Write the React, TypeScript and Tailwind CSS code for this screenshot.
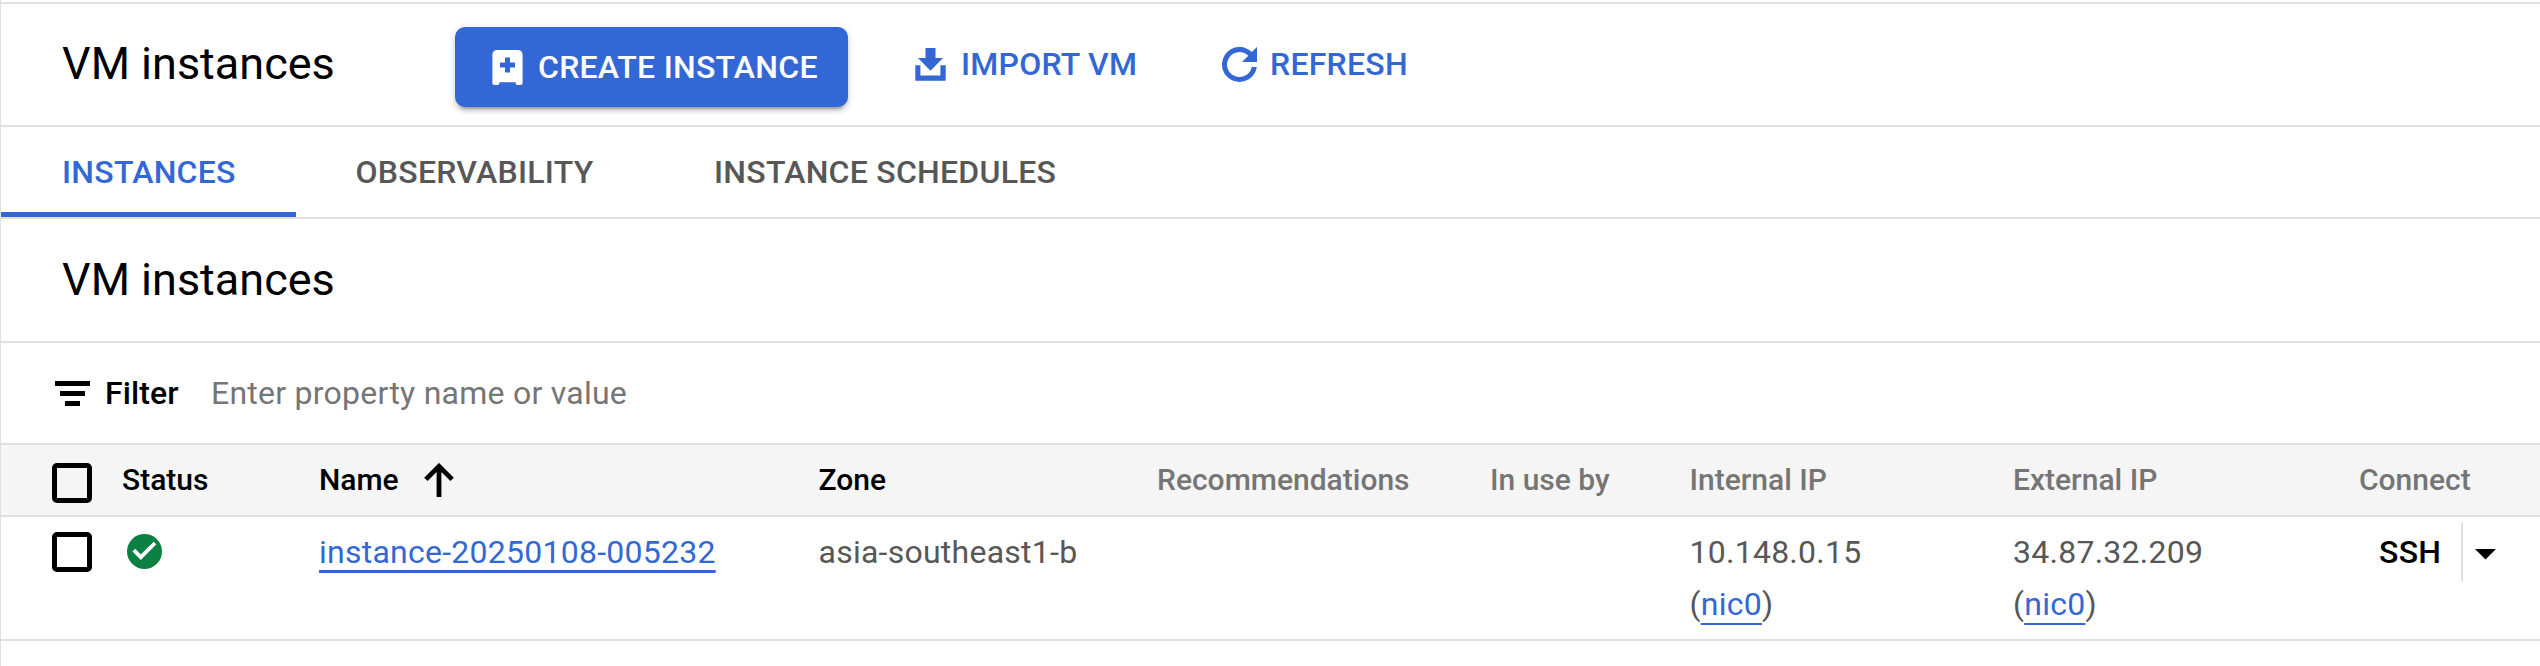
import type { ReactNode } from "react";

function CreateIcon() {
  return (
    <svg width="31" height="35" viewBox="0 0 31 35" className="block shrink-0">
      <path
        fill="#fff"
        fillRule="evenodd"
        d="M5 0H26A4.6 4.6 0 0 1 30.6 4.6V33.2A1.8 1.8 0 0 1 28.8 35H25.4A1.8 1.8 0 0 1 23.6 33.2V32.2H7.4V33.2A1.8 1.8 0 0 1 5.6 35H2.2A1.8 1.8 0 0 1 .4 33.2V4.6A4.6 4.6 0 0 1 5 0ZM13 7.4V12.4H8V17.4H13V22.5H18V17.4H23V12.4H18V7.4Z"
      />
    </svg>
  );
}

function ImportIcon() {
  return (
    <svg width="31" height="33" viewBox="0 0 31 33" className="block shrink-0" fill="#3367d6">
      <path d="M10.5 0H20.5V10H28L15.5 22.7L3 10H10.5Z" />
      <path d="M.3 17.2H5.4V27.4H25.4V17.2H30.7V32.7H.3Z" />
    </svg>
  );
}

function RefreshIcon() {
  return (
    <svg width="35" height="35" viewBox="0 0 35 35" className="block shrink-0" fill="#3367d6">
      <path d="M29.9 5.1L35 0V15H20L26.3 8.7A12.5 12.5 0 1 0 29.75 20H34.8A17.5 17.5 0 1 1 29.9 5.1Z" />
    </svg>
  );
}

function FilterIcon() {
  return (
    <svg width="35" height="25" viewBox="0 0 35 25" className="block shrink-0">
      <path d="M0 0H35V5H0ZM5 10H30V15H5ZM10 20H25V25H10Z" />
    </svg>
  );
}

function SortIcon() {
  return (
    <svg width="30" height="34" viewBox="0 0 30 34" className="block shrink-0" fill="none" stroke="#000">
      <path d="M15 4V34" strokeWidth="4.8" />
      <path d="M1.9 16.4L15 3.3L28.1 16.4" strokeWidth="4.8" />
    </svg>
  );
}

function StatusIcon() {
  return (
    <svg width="35" height="35" viewBox="0 0 35 35" className="block">
      <circle cx="17.5" cy="17.5" r="17.5" fill="#0b8043" />
      <path d="M6.8 16.2L13.8 23.2L28 9" fill="none" stroke="#fff" strokeWidth="3.8" />
    </svg>
  );
}

function Checkbox() {
  return <span role="checkbox" aria-checked="false" className="block h-10 w-10 rounded-[5px] border-5 border-black" />;
}

function Nic({ address }: { address: string }) {
  return (
    <div>
      <div>{address}</div>
      <div>
        (
        <a className="text-[#3367d6] underline decoration-[#3367d6] decoration-2 underline-offset-8 [text-decoration-skip-ink:none]">
          nic0
        </a>
        )
      </div>
    </div>
  );
}

const columns = "grid grid-cols-[121px_197px_499.5px_338.5px_333px_199.5px_323.5px_1fr]";

function Head({ children, muted }: { children: ReactNode; muted?: boolean }) {
  return <div className={muted ? "text-[#757575]" : "text-black"}>{children}</div>;
}

export default function App() {
  return (
    <div className="flex h-[666px] w-[2540px] flex-col overflow-hidden border-l border-[#e0e0e0] bg-white pt-0.5 font-['Roboto',sans-serif] text-[32px] leading-[52px] tracking-[0.25px] whitespace-nowrap text-black">
      <header className="flex h-[125px] items-start border-y-2 border-[#e0e0e0] pl-[61px]">
        <h1 className="mt-[34px] w-[393px] text-[45px] tracking-normal">VM instances</h1>
        <button className="mt-[23px] flex h-20 w-[393px] items-center rounded-[10px] bg-[#3367d6] pl-[37px] font-medium text-white shadow-[0_6px_2px_-4px_rgba(0,0,0,0.2),0_4px_4px_rgba(0,0,0,0.14),0_2px_10px_rgba(0,0,0,0.12)]">
          <CreateIcon />
          <span className="ml-[15px]">CREATE INSTANCE</span>
        </button>
        <button className="mt-[34px] ml-[67px] flex w-[307px] items-center font-medium text-[#3367d6]">
          <ImportIcon />
          <span className="ml-[15px]">IMPORT VM</span>
        </button>
        <button className="mt-[34px] flex items-center font-medium text-[#3367d6]">
          <RefreshIcon />
          <span className="ml-[13px]">REFRESH</span>
        </button>
      </header>

      <nav className="flex h-[92px] border-b-2 border-[#e0e0e0] font-medium text-[#575757]">
        <a className="flex w-[295px] items-center border-b-5 border-[#3367d6] pt-[5px] pl-[61px] text-[#3367d6]">INSTANCES</a>
        <a className="flex w-[358px] items-center pl-[59.5px]">OBSERVABILITY</a>
        <a className="flex items-center pl-[60px]">INSTANCE SCHEDULES</a>
      </nav>

      <section className="flex h-[124px] items-center border-b-2 border-[#e0e0e0] pl-[61px]">
        <h2 className="text-[45px] tracking-normal">VM instances</h2>
      </section>

      <div className="flex h-[102px] items-center border-b-2 border-[#e0e0e0] pl-[54px]">
        <FilterIcon />
        <span className="ml-[15px] w-[106px] font-medium tracking-[0.1px]">Filter</span>
        <span className="text-[#757575]">Enter property name or value</span>
      </div>

      <div className={`${columns} h-[72px] items-center border-b-2 border-[#e0e0e0] bg-[#f5f5f5] text-[30px] font-medium tracking-normal`}>
        <div className="pt-[6px] pl-[51px]">
          <Checkbox />
        </div>
        <Head>Status</Head>
        <div className="flex items-center">
          Name
          <span className="ml-[25px]">
            <SortIcon />
          </span>
        </div>
        <Head>Zone</Head>
        <Head muted>Recommendations</Head>
        <Head muted>In use by</Head>
        <Head muted>Internal IP</Head>
        <div className="grid grid-cols-[346px_1fr] text-[#757575]">
          <span>External IP</span>
          <span>Connect</span>
        </div>
      </div>

      <div className={`${columns} h-[124px] items-start border-b-2 border-[#e0e0e0] pt-[9px] text-[#575757]`}>
        <div className="pt-[6px] pl-[51px]">
          <Checkbox />
        </div>
        <div className="pt-2 pl-[5px]">
          <StatusIcon />
        </div>
        <div>
          <a className="text-[#3367d6] underline decoration-[#3367d6] decoration-[3px] underline-offset-[7px] [text-decoration-skip-ink:none]">
            instance-20250108-005232
          </a>
        </div>
        <div>asia-southeast1-b</div>
        <div />
        <div />
        <Nic address="10.148.0.15" />
        <div className="grid grid-cols-[366px_82px_1fr]">
          <Nic address="34.87.32.209" />
          <div className="font-medium text-black">SSH</div>
          <div className="-mt-1 flex h-[60px] items-center border-l-2 border-[#e0e0e0] pl-3">
            <svg width="21" height="11" viewBox="0 0 21 11" className="mt-[5px] block">
              <path d="M0 0H21L10.5 10.5Z" />
            </svg>
          </div>
        </div>
      </div>
    </div>
  );
}
